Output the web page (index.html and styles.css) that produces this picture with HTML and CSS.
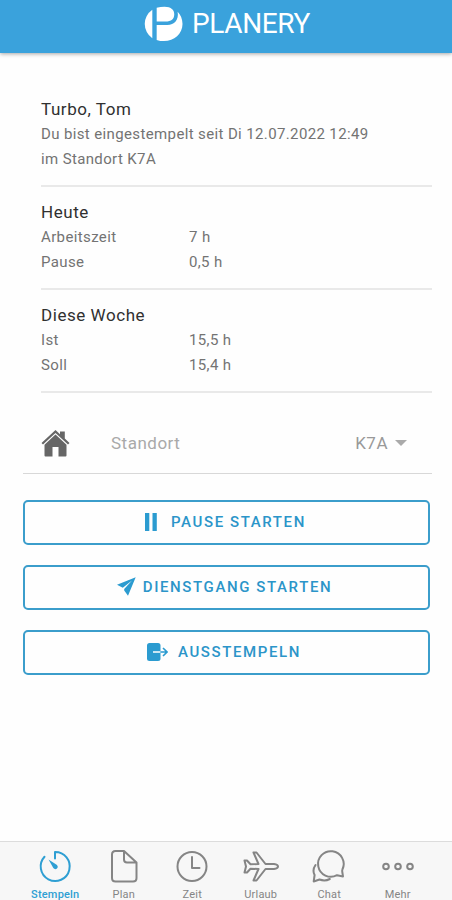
FILE: index.html
```html
<!DOCTYPE html>
<html lang="de">
<head>
  <meta charset="UTF-8" />
  <meta name="viewport" content="width=device-width, initial-scale=1.0"/>
  <title>Planery</title>
  <link rel="stylesheet" href="styles.css">
</head>
<body>
  <header>
    <svg class="logo" viewBox="0 0 40 36" fill="#fff">
      <path d="M8.500 3.500A19 18 0 0 0 8.500 32.500Z"/>
      <path d="M13 1.300Q17 .2 21 .2C28 .2 31 3.500 31 8C31 13 28 15.500 22 15.500H13Z"/>
      <path d="M34.500 5.500C37.500 8.500 39.500 13 39.500 18C39.500 28 31 35.500 20.500 35.500Q16.500 35.500 13 34.300V19H24C31 19 36 14 34.500 5.500Z"/>
    </svg>
    <h1>PLANERY</h1>
  </header>

  <main>
    <section class="info">
      <h2>Turbo, Tom</h2>
      <p class="status">Du bist eingestempelt seit Di 12.07.2022 12:49</p>
      <p>im Standort K7A</p>
    </section>
    <section class="info">
      <h2>Heute</h2>
      <div class="row"><span>Arbeitszeit</span><span>7 h</span></div>
      <div class="row"><span>Pause</span><span>0,5 h</span></div>
    </section>
    <section class="info">
      <h2>Diese Woche</h2>
      <div class="row"><span>Ist</span><span>15,5 h</span></div>
      <div class="row"><span>Soll</span><span>15,4 h</span></div>
    </section>

    <div class="location">
      <svg class="home" viewBox="0 0 28 27" fill="#666">
        <path d="M14 0L0 13L1.500 14.600L14 3L26.500 14.600L28 13L23.300 8.600V1.500H18.500V4.200Z"/>
        <path d="M14 4.500L3 14.700V25.500Q3 26.500 4 26.500H11V17H17V26.500H24Q25 26.500 25 25.500V14.700Z"/>
      </svg>
      <span class="label">Standort</span>
      <span class="value">K7A</span>
      <span class="caret"></span>
    </div>

    <div class="actions">
      <button class="pause">
        <svg width="12" height="18" viewBox="0 0 12 18" fill="#2b9bd0"><path d="M0 0H4.300V18H0ZM7.500 0H11.800V18H7.500Z"/></svg>
        <span>PAUSE STARTEN</span>
      </button>
      <button class="errand">
        <svg width="19" height="19" viewBox="0 0 19 19" fill="#2b9bd0"><path d="M18.700 .3L0 7.800L5.800 10.800L15 3.500L7.200 12V13.500L11 18.700Z"/></svg>
        <span>DIENSTGANG STARTEN</span>
      </button>
      <button class="logout">
        <svg width="21" height="18" viewBox="0 0 21 18">
          <rect x="0" y="0" width="13.500" height="18" rx="2.500" fill="#2b9bd0"/>
          <path d="M6 9H13.500" stroke="#fff" stroke-width="1.500"/>
          <path d="M13.500 9H19.500M16 5L20 9L16 13" stroke="#2b9bd0" stroke-width="1.600" fill="none"/>
        </svg>
        <span>AUSSTEMPELN</span>
      </button>
    </div>
  </main>

  <nav>
    <a class="active">
      <svg viewBox="0 0 36 36"><path d="M18 10.500V4A14.500 14.500 0 1 1 7.500 8.700"/><path d="M11.500 11.500L20 17Q21.700 19 20 20.500Q18 22 16.300 20Z" fill="currentColor" stroke="none"/></svg>
      <span>Stempeln</span>
    </a>
    <a>
      <svg viewBox="0 0 36 36"><path d="M9.500 3H18L30.500 14.500V30Q30.500 33.500 27 33.500H9.500Q6 33.500 6 30V6.500Q6 3 9.500 3ZM18 3V11.500Q18 14.500 21 14.500H30.500"/></svg>
      <span>Plan</span>
    </a>
    <a>
      <svg viewBox="0 0 36 36"><circle cx="18" cy="18.500" r="14.500"/><path d="M18 9V20H25.500"/></svg>
      <span>Zeit</span>
    </a>
    <a>
      <svg viewBox="0 0 36 36"><path d="M1.500 12.500H4L7.500 16.300L15.500 16L10.500 4.500H13.500L22.500 16H31Q35 16.500 35 18.500Q35 20.500 31 21H22.500L13.500 32.500H10.500L15.500 21L7.500 20.700L4 24.500H1.500L3 18.500Z"/></svg>
      <span>Urlaub</span>
    </a>
    <a>
      <svg viewBox="0 0 36 36"><path d="M32 28.500L26 27.200A12.800 12.800 0 1 1 31.400 21.500Q31 22.500 31.300 24Z"/><path d="M4.500 17Q1 22 3.600 27L2.700 33.500L8.500 31.500Q14 33.500 18.800 31"/></svg>
      <span>Chat</span>
    </a>
    <a>
      <svg viewBox="0 0 36 36"><circle cx="6" cy="18.500" r="2.800"/><circle cx="18" cy="18.500" r="2.800"/><circle cx="30" cy="18.500" r="2.800"/></svg>
      <span>Mehr</span>
    </a>
  </nav>
</body>
</html>
```
FILE: styles.css
```css
* {
  margin: 0;
  padding: 0;
  box-sizing: border-box;
}

body {
  font-family: Roboto, sans-serif;
  background: #fefefe;
  color: #737373;
  height: 900px;
  display: flex;
  flex-direction: column;
  overflow: hidden;
}

header {
  height: 53px;
  flex: none;
  background: #3aa2dc;
  box-shadow: 0 1px 4px rgba(0, 0, 0, 0.35);
  display: flex;
  justify-content: center;
  align-items: flex-start;
  gap: 9px;
  padding: 6px 0 0 2px;
}

.logo {
  width: 39px;
  height: 36px;
}

h1 {
  color: #fff;
  font-size: 28px;
  font-weight: 400;
  line-height: 35px;
  letter-spacing: -0.4px;
}

main {
  flex: 1;
  padding: 34px 20px 0 23px;
}

.info {
  margin-left: 18px;
  height: 103px;
  padding-top: 13px;
  border-bottom: 2px solid #e9e9e9;
  font-size: 15px;
  line-height: 25px;
  letter-spacing: 0.37px;
}

.info:first-child {
  height: 100px;
  padding-top: 10px;
}

h2 {
  color: #303030;
  font-size: 17px;
  font-weight: 400;
  line-height: 25px;
  letter-spacing: 0.55px;
}

.row {
  display: grid;
  grid-template-columns: 148px 1fr;
}

.location {
  height: 81px;
  display: flex;
  align-items: center;
  padding: 20px 25px 0 18px;
  border-bottom: 1px solid #d8d8d8;
  color: #a9a9a9;
  font-size: 17px;
  letter-spacing: 0.5px;
}

.home {
  width: 29px;
  height: 27px;
}

.label {
  flex: 1;
  margin-left: 41px;
}

.value {
  color: #999;
}

.caret {
  border: 6px solid transparent;
  border-top-color: #aaa;
  border-bottom: 0;
  margin-left: 7px;
}

.actions {
  display: grid;
  gap: 20px;
  margin-top: 26px;
  padding-right: 2px;
}

button {
  height: 45px;
  display: flex;
  justify-content: center;
  align-items: center;
  padding-bottom: 2px;
  border: 2px solid #3b9dcb;
  border-radius: 5px;
  background: transparent;
  color: #2b95c9;
  font: 500 15px Roboto, sans-serif;
  letter-spacing: 1.6px;
}

.pause {
  gap: 14px;
  padding-right: 2px;
}

.errand {
  gap: 7px;
  padding-right: 4px;
}

.logout {
  gap: 10px;
  padding-right: 5px;
}

nav {
  height: 59px;
  flex: none;
  display: grid;
  grid-template-columns: repeat(6, 1fr);
  padding: 6px 20px 0 21px;
  background: #f7f7f7;
  border-top: 1px solid #dcdcdc;
}

nav a {
  display: flex;
  flex-direction: column;
  align-items: center;
  color: #858585;
  font-size: 11px;
  line-height: 14px;
  letter-spacing: 0.2px;
}

nav svg {
  width: 36px;
  height: 36px;
  margin-bottom: 4px;
  fill: none;
  stroke: currentColor;
  stroke-width: 2;
  stroke-linejoin: round;
  stroke-linecap: round;
}

nav .active {
  color: #2f9fd3;
}

.active span {
  font-weight: 500;
}
```
